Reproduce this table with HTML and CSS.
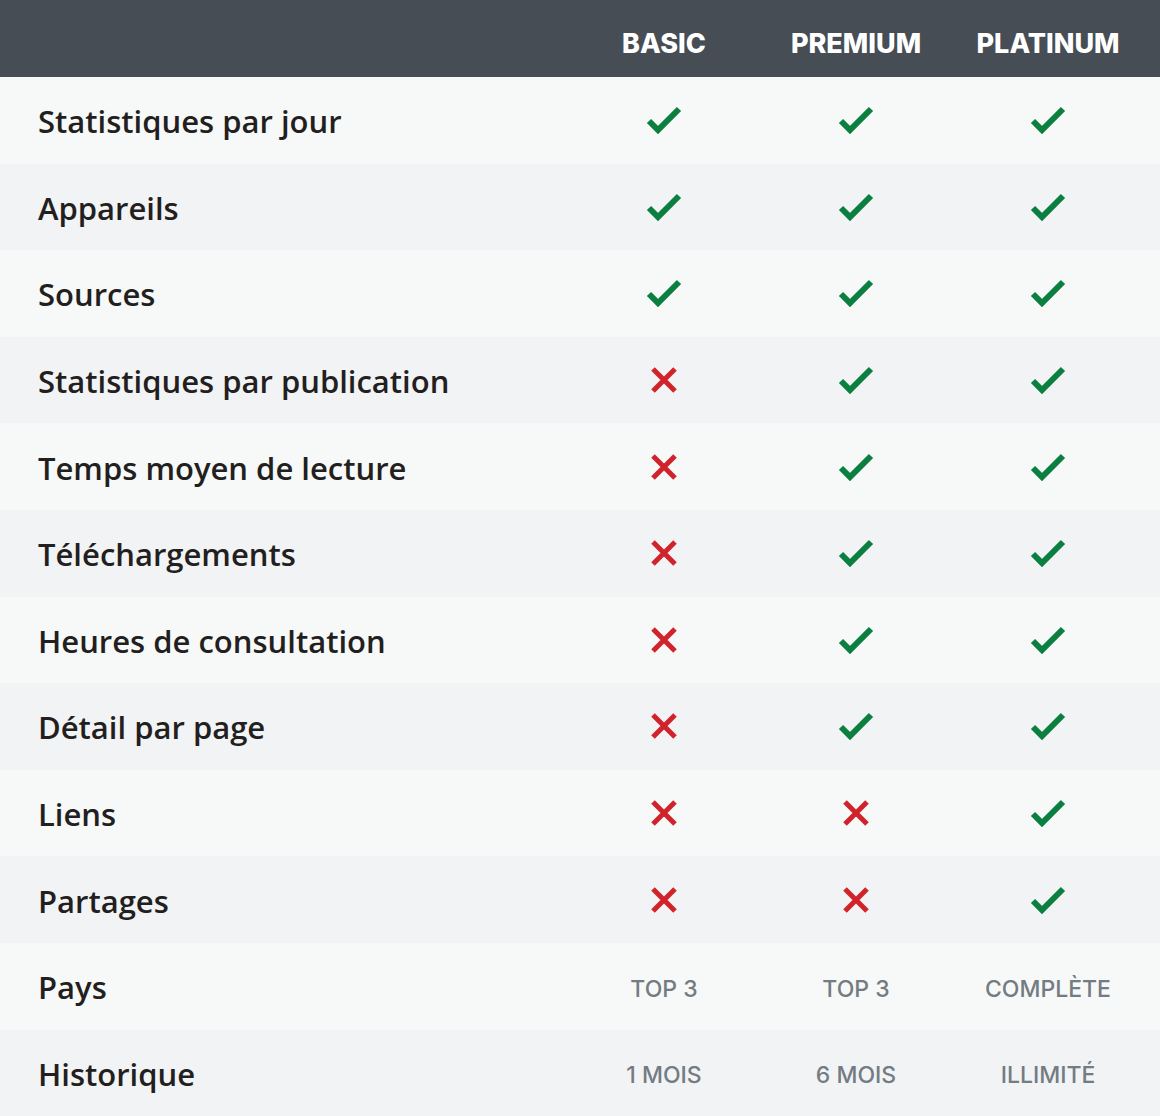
FILE: index.html
```html
<!DOCTYPE html>
<html lang="fr">
<head>
<meta charset="utf-8">
<link rel="stylesheet" href="styles.css">
</head>
<body>
<svg width="0" height="0" class="defs">
  <defs>
    <symbol id="yes" viewBox="0 0 36 28"><path d="M3 15 L12 24 L33 3" fill="none" stroke="#0a7f40" stroke-width="6"/></symbol>
    <symbol id="no" viewBox="0 0 28 28"><path d="M3 3 L25 25 M25 3 L3 25" fill="none" stroke="#d1232b" stroke-width="5"/></symbol>
  </defs>
</svg>
<div class="table">
  <div class="row head">
    <div class="label"></div>
    <div class="cell">BASIC</div>
    <div class="cell">PREMIUM</div>
    <div class="cell">PLATINUM</div>
  </div>
  <div class="row odd">
    <div class="label">Statistiques par jour</div>
    <div class="cell"><svg class="y"><use href="#yes"/></svg></div>
    <div class="cell"><svg class="y"><use href="#yes"/></svg></div>
    <div class="cell"><svg class="y"><use href="#yes"/></svg></div>
  </div>
  <div class="row even">
    <div class="label">Appareils</div>
    <div class="cell"><svg class="y"><use href="#yes"/></svg></div>
    <div class="cell"><svg class="y"><use href="#yes"/></svg></div>
    <div class="cell"><svg class="y"><use href="#yes"/></svg></div>
  </div>
  <div class="row odd">
    <div class="label">Sources</div>
    <div class="cell"><svg class="y"><use href="#yes"/></svg></div>
    <div class="cell"><svg class="y"><use href="#yes"/></svg></div>
    <div class="cell"><svg class="y"><use href="#yes"/></svg></div>
  </div>
  <div class="row even">
    <div class="label">Statistiques par publication</div>
    <div class="cell"><svg class="n"><use href="#no"/></svg></div>
    <div class="cell"><svg class="y"><use href="#yes"/></svg></div>
    <div class="cell"><svg class="y"><use href="#yes"/></svg></div>
  </div>
  <div class="row odd">
    <div class="label">Temps moyen de lecture</div>
    <div class="cell"><svg class="n"><use href="#no"/></svg></div>
    <div class="cell"><svg class="y"><use href="#yes"/></svg></div>
    <div class="cell"><svg class="y"><use href="#yes"/></svg></div>
  </div>
  <div class="row even">
    <div class="label">Téléchargements</div>
    <div class="cell"><svg class="n"><use href="#no"/></svg></div>
    <div class="cell"><svg class="y"><use href="#yes"/></svg></div>
    <div class="cell"><svg class="y"><use href="#yes"/></svg></div>
  </div>
  <div class="row odd">
    <div class="label">Heures de consultation</div>
    <div class="cell"><svg class="n"><use href="#no"/></svg></div>
    <div class="cell"><svg class="y"><use href="#yes"/></svg></div>
    <div class="cell"><svg class="y"><use href="#yes"/></svg></div>
  </div>
  <div class="row even">
    <div class="label">Détail par page</div>
    <div class="cell"><svg class="n"><use href="#no"/></svg></div>
    <div class="cell"><svg class="y"><use href="#yes"/></svg></div>
    <div class="cell"><svg class="y"><use href="#yes"/></svg></div>
  </div>
  <div class="row odd">
    <div class="label">Liens</div>
    <div class="cell"><svg class="n"><use href="#no"/></svg></div>
    <div class="cell"><svg class="n"><use href="#no"/></svg></div>
    <div class="cell"><svg class="y"><use href="#yes"/></svg></div>
  </div>
  <div class="row even">
    <div class="label">Partages</div>
    <div class="cell"><svg class="n"><use href="#no"/></svg></div>
    <div class="cell"><svg class="n"><use href="#no"/></svg></div>
    <div class="cell"><svg class="y"><use href="#yes"/></svg></div>
  </div>
  <div class="row odd">
    <div class="label">Pays</div>
    <div class="cell txt">TOP 3</div>
    <div class="cell txt">TOP 3</div>
    <div class="cell txt">COMPLÈTE</div>
  </div>
  <div class="row even">
    <div class="label">Historique</div>
    <div class="cell txt">1 MOIS</div>
    <div class="cell txt">6 MOIS</div>
    <div class="cell txt">ILLIMITÉ</div>
  </div>
</div>
</body>
</html>
```
FILE: styles.css
```css
html, body { margin: 0; padding: 0; }
body { background: #f7f9f8; width: 1160px; }
.defs { position: absolute; width: 0; height: 0; overflow: hidden; }
.table { width: 1160px; }
.row {
  display: grid;
  grid-template-columns: 1fr 192px 192px 192px;
  padding: 0 16px 0 38px;
  height: 86.6px;
  align-items: center;
}
.row.head {
  height: 77px;
  background: #464d54;
  color: #fff;
  font-family: "Inter", "Liberation Sans", sans-serif;
  font-weight: 800;
  font-size: 27px;
}
.row.head .cell { padding-top: 10px; }
.odd { background: #f7f9f8; }
.even { background: #f2f3f5; }
.label {
  font-family: "Open Sans", "Liberation Sans", sans-serif;
  font-weight: 600;
  font-size: 31px;
  color: #231f20;
  padding-top: 2px;
}
.cell {
  display: flex;
  justify-content: center;
  align-items: center;
}
.y { display: block; width: 36px; height: 28px; }
.n { display: block; width: 28px; height: 28px; }
.txt {
  font-family: "Inter", "Liberation Sans", sans-serif;
  font-weight: 500;
  font-size: 23px;
  color: #737b83;
  padding-top: 5px;
}
```
